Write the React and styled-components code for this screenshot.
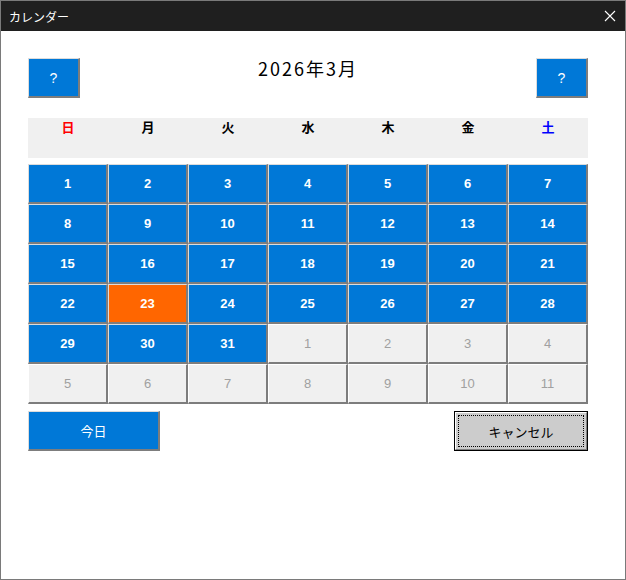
import React from "react";
import styled, { createGlobalStyle, css } from "styled-components";

const GlobalStyle = createGlobalStyle`
  html, body { margin: 0; padding: 0; background: #ffffff; }
  body { font-family: "Liberation Sans", "Noto Sans CJK JP", sans-serif; }
`;

const BLUE = "#0078d7";

const Window = styled.div`
  width: 626px;
  height: 580px;
  box-sizing: border-box;
  border: 1px solid #7a7a7a;
  background: #ffffff;
  display: flex;
  flex-direction: column;
`;

const TitleBar = styled.div`
  height: 30px;
  background: #1f1f1f;
  color: #ffffff;
  display: flex;
  align-items: center;
  justify-content: space-between;
  padding: 0 9px 0 8px;
  font-family: "Noto Sans CJK JP", sans-serif;
  font-size: 12px;
`;

const Body = styled.div`
  padding: 27px 0 0 27px;
  width: 560px;
`;

const NavRow = styled.div`
  display: flex;
  justify-content: space-between;
  align-items: flex-start;
  height: 40px;
`;

const raised = css`
  box-sizing: border-box;
  border-top: 1px solid #dcdcdc;
  border-left: 1px solid #dcdcdc;
  border-right: 2px solid #7d7d7d;
  border-bottom: 2px solid #7d7d7d;
`;

const NavButton = styled.div`
  ${raised};
  width: 52px;
  height: 40px;
  background: ${BLUE};
  color: #ffffff;
  display: flex;
  align-items: center;
  justify-content: center;
  font-size: 14px;
`;

const MonthTitle = styled.div`
  font-family: "Noto Sans CJK JP", sans-serif;
  font-size: 18px;
  line-height: 20px;
  letter-spacing: 2px;
  color: #000;
`;

const Header = styled.div`
  margin-top: 20px;
  height: 40px;
  background: #f0f0f0;
  display: grid;
  grid-template-columns: repeat(7, 80px);
`;

const DayName = styled.div`
  text-align: center;
  font-family: "Noto Sans CJK JP", sans-serif;
  font-weight: bold;
  font-size: 13px;
  line-height: 18px;
  color: ${(p) => p.$color};
`;

const Grid = styled.div`
  margin-top: 6px;
  display: grid;
  grid-template-columns: repeat(7, 80px);
  grid-auto-rows: 40px;
`;

const Cell = styled.div`
  ${raised};
  display: flex;
  align-items: center;
  justify-content: center;
  font-size: 13px;
  ${(p) =>
    p.$kind === "today"
      ? css`background: #ff6600; color: #fff; font-weight: bold;`
      : p.$kind === "other"
      ? css`background: #f0f0f0; color: #a0a0a0; font-weight: normal; border-top-color: #ffffff; border-left-color: #ffffff;`
      : css`background: ${BLUE}; color: #fff; font-weight: bold;`}
`;

const Footer = styled.div`
  margin-top: 7px;
  display: flex;
  justify-content: space-between;
`;

const TodayButton = styled.div`
  ${raised};
  width: 132px;
  height: 40px;
  background: ${BLUE};
  color: #fff;
  display: flex;
  align-items: center;
  justify-content: center;
  font-family: "Noto Sans CJK JP", sans-serif;
  font-size: 13px;
`;

const CancelButton = styled.div`
  box-sizing: border-box;
  width: 134px;
  height: 40px;
  border: 1px solid #000;
  background: #cccccc;
  display: flex;
`;

const CancelInner = styled.div`
  flex: 1;
  box-sizing: border-box;
  border-top: 1px solid #ffffff;
  border-left: 1px solid #ffffff;
  border-right: 1px solid #808080;
  border-bottom: 1px solid #808080;
  padding: 2px;
  display: flex;
`;

const FocusRect = styled.div`
  flex: 1;
  border: 1px dotted #000;
  display: flex;
  align-items: center;
  justify-content: center;
  font-family: "Noto Sans CJK JP", sans-serif;
  font-size: 13px;
  color: #000;
`;

const days = [
  { label: "日", color: "#ff0000" },
  { label: "月", color: "#000" },
  { label: "火", color: "#000" },
  { label: "水", color: "#000" },
  { label: "木", color: "#000" },
  { label: "金", color: "#000" },
  { label: "土", color: "#0000ff" },
];

const cells = [];
for (let d = 1; d <= 31; d++) cells.push({ n: d, kind: d === 23 ? "today" : "month" });
for (let d = 1; d <= 11; d++) cells.push({ n: d, kind: "other" });

export default function App() {
  return (
    <>
      <GlobalStyle />
      <Window>
        <TitleBar>
          <span>カレンダー</span>
          <svg width="12" height="12" viewBox="0 0 12 12">
            <path d="M1 1 L11 11 M11 1 L1 11" stroke="#fff" strokeWidth="1.1" />
          </svg>
        </TitleBar>
        <Body>
          <NavRow>
            <NavButton>?</NavButton>
            <MonthTitle>2026年3月</MonthTitle>
            <NavButton>?</NavButton>
          </NavRow>
          <Header>
            {days.map((d) => (
              <DayName key={d.label} $color={d.color}>
                {d.label}
              </DayName>
            ))}
          </Header>
          <Grid>
            {cells.map((c, i) => (
              <Cell key={i} $kind={c.kind}>
                {c.n}
              </Cell>
            ))}
          </Grid>
          <Footer>
            <TodayButton>今日</TodayButton>
            <CancelButton>
              <CancelInner>
                <FocusRect>キャンセル</FocusRect>
              </CancelInner>
            </CancelButton>
          </Footer>
        </Body>
      </Window>
    </>
  );
}
